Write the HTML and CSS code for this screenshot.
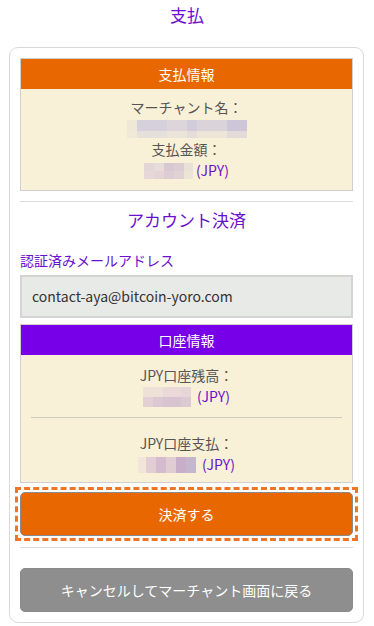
FILE: index.html
```html
<!DOCTYPE html>
<html lang="ja">

<head>
    <meta charset="UTF-8">
    <meta name="viewport" content="width=device-width, initial-scale=1.0">
    <title>支払</title>
    <link rel="stylesheet" href="styles.css">
</head>

<body>
    <h1 class="title">支払</h1>
    <div class="card">
        <div class="infobox">
            <div class="infohead orange">支払情報</div>
            <div class="infobody">
                <p>マーチャント名：</p>
                <p><span class="blur blur1"></span></p>
                <p>支払金額：</p>
                <p><span class="blur blur2"></span><span class="cur">(JPY)</span></p>
            </div>
        </div>
        <hr class="line">
        <h2 class="subtitle">アカウント決済</h2>
        <div class="label">認証済みメールアドレス</div>
        <div class="mailbox">contact-aya@bitcoin-yoro.com</div>
        <div class="infobox">
            <div class="infohead purple">口座情報</div>
            <div class="infobody account">
                <div class="group">
                    <p>JPY口座残高：</p>
                    <p><span class="blur blur3"></span><span class="cur">(JPY)</span></p>
                </div>
                <hr class="inline">
                <div class="group second">
                    <p>JPY口座支払：</p>
                    <p><span class="blur blur4"></span><span class="cur">(JPY)</span></p>
                </div>
            </div>
        </div>
        <div class="paybox">
            <button class="btn pay">決済する</button>
        </div>
        <hr class="line last">
        <button class="btn cancel">キャンセルしてマーチャント画面に戻る</button>
    </div>
</body>

</html>
```

FILE: styles.css
```css
* {
    margin: 0;
    padding: 0;
    box-sizing: border-box;
}

body {
    font-family: "Noto Sans CJK JP", "Noto Sans", sans-serif;
    font-size: 14px;
    color: #555;
    background: #fff;
}

.title {
    font-size: 17px;
    font-weight: normal;
    line-height: 30px;
    text-align: center;
    color: #6a0fd0;
    margin-bottom: 17px;
}

.card {
    margin: 0 10px 0 9px;
    border: 1px solid #d9d9d9;
    border-radius: 9px;
    padding: 10px 10px 10px;
}

.infobox {
    border: 1px solid #cfcfcf;
    background: #f8f0d7;
}

.infohead {
    height: 30px;
    line-height: 30px;
    text-align: center;
    color: #fff;
}

.orange {
    background: #e96700;
}

.purple {
    background: #7800e8;
}

.infobody {
    text-align: center;
    padding: 8px 0 9px;
    line-height: 21px;
}

.infobody p {
    height: 21px;
}

.blur {
    display: inline-block;
    vertical-align: middle;
    height: 18px;
    margin-top: -3px;
}

.blur1 {
    width: 120px;
    background:
        linear-gradient(90deg, #efe8d6 0 10px, #d5d0dc 10px 40px, #dcd6da 40px 60px, #d2ccda 60px 70px, #dad4da 70px 100px, #ccc6d8 100px 120px) top / 100% 11px no-repeat,
        linear-gradient(90deg, #f0e9d8 0 10px, #e6e0da 10px 40px, #ebe4d8 40px 60px, #e4ddda 60px 70px, #ece5d8 70px 100px, #e2dbd9 100px 120px) bottom / 100% 7px no-repeat;
}

.blur2 {
    width: 49px;
    height: 16px;
    margin-right: 3px;
    background:
        linear-gradient(90deg, #e4d6d6 0 10px, #e8dcd8 10px 20px, #d8c8d2 20px 30px, #dccdd4 30px 40px, #ebe0d8 40px 49px) top / 100% 8px no-repeat,
        linear-gradient(90deg, #e6d8d8 0 10px, #e4d4d6 10px 20px, #dcccd4 20px 30px, #e0d2d4 30px 40px, #eee4d6 40px 49px) bottom / 100% 8px no-repeat;
}

.blur3 {
    width: 48px;
    height: 20px;
    margin-right: 6px;
    background:
        linear-gradient(90deg, #eee2d8 0 20px, #ead9d8 20px 38px, #e6d6d8 38px 48px) top / 100% 10px no-repeat,
        linear-gradient(90deg, #e2d0d4 0 10px, #dbc8d2 10px 20px, #d8c4d0 20px 38px, #dccad2 38px 48px) bottom / 100% 10px no-repeat;
}

.blur4 {
    width: 58px;
    height: 16px;
    margin-right: 6px;
    background: linear-gradient(90deg, #f2e6da 0 8px, #e2cdd4 8px 18px, #d4bcce 18px 28px, #e0cdd4 28px 38px, #c8aec8 38px 48px, #c4b6cc 48px 58px);
}

.cur {
    color: #6a0fd0;
}

.line {
    border: none;
    border-top: 1px solid #dcdcdc;
    margin: 10px 0 3px;
}

.subtitle {
    font-size: 17px;
    font-weight: normal;
    line-height: 30px;
    text-align: center;
    color: #6a0fd0;
}

.label {
    color: #6a0fd0;
    line-height: 21px;
    margin: 15px 0 4px;
}

.mailbox {
    height: 43px;
    line-height: 39px;
    border: 2px solid #d4d4d4;
    background: #e8eae7;
    padding-left: 10px;
    color: #333;
    margin-bottom: 6px;
}

.account {
    padding: 10px 0 7px;
}

.inline {
    border: none;
    border-top: 1px solid #cfcac0;
    margin: 10px 10px 15px;
}

.btn {
    display: block;
    width: 100%;
    height: 44px;
    border: 1px solid #8a8a8a;
    border-radius: 5px;
    color: #fff;
    font-family: inherit;
    font-size: 14px;
    cursor: pointer;
}

.paybox {
    margin: 4px -5px 0;
    border: 3px dashed #f07426;
    padding: 2px;
}

.pay {
    background: #e96700;
}

.line.last {
    margin: 6px 0 20px;
}

.cancel {
    background: #8e8e8e;
    border-color: #8a8a8a;
}
```
